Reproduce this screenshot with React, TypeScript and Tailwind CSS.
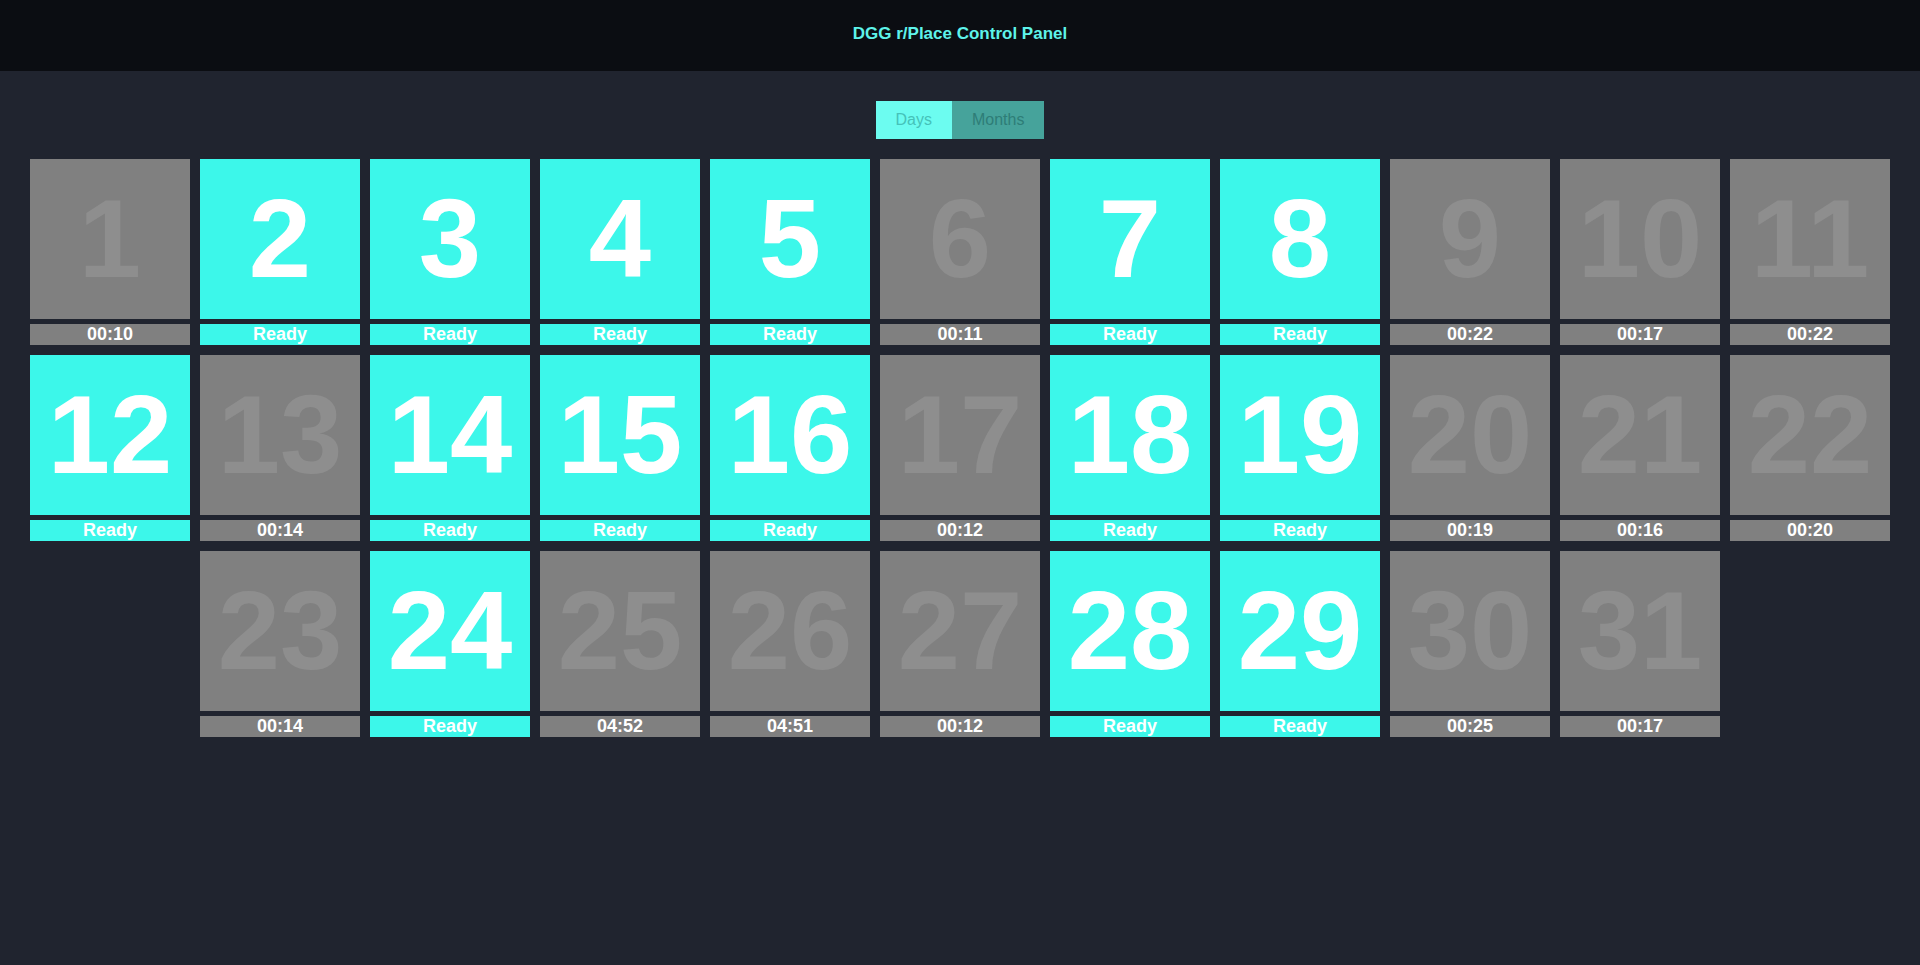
const days: { n: number; label: string }[] = [
  { n: 1, label: "00:10" },
  { n: 2, label: "Ready" },
  { n: 3, label: "Ready" },
  { n: 4, label: "Ready" },
  { n: 5, label: "Ready" },
  { n: 6, label: "00:11" },
  { n: 7, label: "Ready" },
  { n: 8, label: "Ready" },
  { n: 9, label: "00:22" },
  { n: 10, label: "00:17" },
  { n: 11, label: "00:22" },
  { n: 12, label: "Ready" },
  { n: 13, label: "00:14" },
  { n: 14, label: "Ready" },
  { n: 15, label: "Ready" },
  { n: 16, label: "Ready" },
  { n: 17, label: "00:12" },
  { n: 18, label: "Ready" },
  { n: 19, label: "Ready" },
  { n: 20, label: "00:19" },
  { n: 21, label: "00:16" },
  { n: 22, label: "00:20" },
  { n: 23, label: "00:14" },
  { n: 24, label: "Ready" },
  { n: 25, label: "04:52" },
  { n: 26, label: "04:51" },
  { n: 27, label: "00:12" },
  { n: 28, label: "Ready" },
  { n: 29, label: "Ready" },
  { n: 30, label: "00:25" },
  { n: 31, label: "00:17" },
];

function DayTile({ n, label }: { n: number; label: string }) {
  const ready = label === "Ready";
  return (
    <div className="m-[5px] w-[160px] flex flex-col gap-[5px]">
      <div
        className={
          ready
            ? "h-[160px] flex items-center justify-center bg-[#3cf7ea] text-white"
            : "h-[160px] flex items-center justify-center bg-[#808080] text-[#8e8e8e]"
        }
      >
        <span className="text-[112px] font-bold leading-none">{n}</span>
      </div>
      <div
        className={
          ready
            ? "h-[21px] flex items-center justify-center bg-[#3cf7ea] text-white text-[18px] font-bold"
            : "h-[21px] flex items-center justify-center bg-[#808080] text-white text-[18px] font-bold"
        }
      >
        {label}
      </div>
    </div>
  );
}

export default function App() {
  return (
    <div className="min-h-screen bg-[#20242f] font-['Liberation_Sans',Arial,sans-serif]">
      <header className="h-[71px] bg-[#0b0d12] flex items-center justify-center pb-[3px]">
        <h1 className="text-[17px] font-bold text-[#5ef3ea]">DGG r/Place Control Panel</h1>
      </header>

      <div className="flex justify-center pt-[30px]">
        <div className="flex">
          <button className="px-5 h-[38px] text-[16px] bg-[#6cfcf0] text-[#45c2b9]">Days</button>
          <button className="px-5 h-[38px] text-[16px] bg-[#46a39b] text-[#2e7d77]">Months</button>
        </div>
      </div>

      <div className="flex flex-wrap justify-center px-[25px] pt-[15px]">
        {days.map((d) => (
          <DayTile key={d.n} n={d.n} label={d.label} />
        ))}
      </div>
    </div>
  );
}
